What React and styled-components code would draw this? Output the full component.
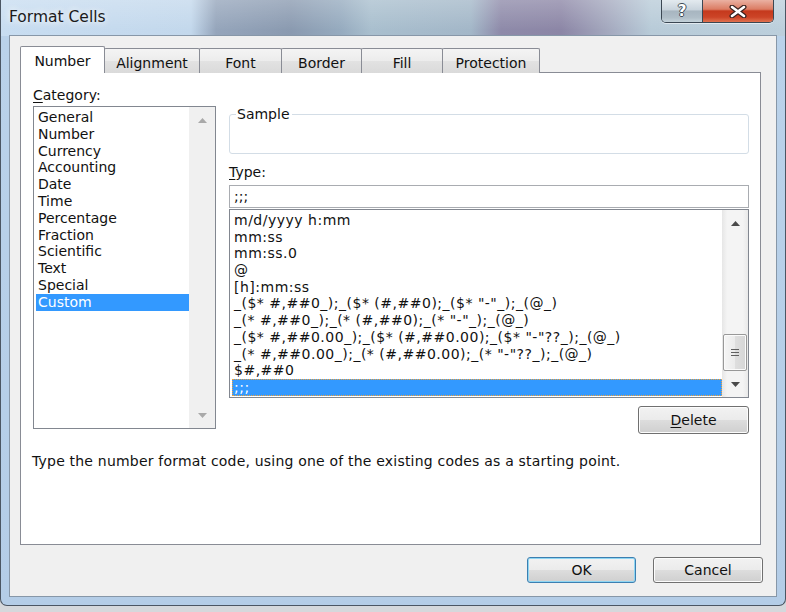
import React from 'react'
import styled, { createGlobalStyle, css } from 'styled-components'

const categories = ['General', 'Number', 'Currency', 'Accounting', 'Date', 'Time', 'Percentage', 'Fraction', 'Scientific', 'Text', 'Special', 'Custom']
const formats = [
  'm/d/yyyy h:mm',
  'mm:ss',
  'mm:ss.0',
  '@',
  '[h]:mm:ss',
  '_($* #,##0_);_($* (#,##0);_($* "-"_);_(@_)',
  '_(* #,##0_);_(* (#,##0);_(* "-"_);_(@_)',
  '_($* #,##0.00_);_($* (#,##0.00);_($* "-"??_);_(@_)',
  '_(* #,##0.00_);_(* (#,##0.00);_(* "-"??_);_(@_)',
  '$#,##0',
  ';;;'
]
const tabs = [['Number', 85], ['Alignment', 96], ['Font', 83], ['Border', 81], ['Fill', 82], ['Protection', 98]]

function Arrow({ down, color }) {
  return (
    <svg width="9" height="5" viewBox="0 0 9 5">
      <polygon points={down ? '0,0 9,0 4.5,5' : '0,5 4.5,0 9,5'} fill={color} />
    </svg>
  )
}

export default function App() {
  return (
    <>
      <GlobalStyle />
      <Window>
        <TitleBar>
          <Title>Format Cells</Title>
          <Caption>
            <CaptionButton $w={40}>
              <HelpGlyph>?</HelpGlyph>
            </CaptionButton>
            <CaptionButton $w={70} $close>
              <svg width="20" height="13" viewBox="0 0 20 13">
                <path d="M4 2 L16 11 M16 2 L4 11" stroke="#3b2320" strokeWidth="5" strokeLinecap="round" />
                <path d="M4 2 L16 11 M16 2 L4 11" stroke="#ffffff" strokeWidth="2.6" strokeLinecap="round" />
              </svg>
            </CaptionButton>
          </Caption>
        </TitleBar>
        <Client>
          <TabStrip>
            {tabs.map(([name, w], i) => (
              <Tab key={name} $w={w} $active={i === 0}>{name}</Tab>
            ))}
          </TabStrip>
          <Panel>
            <Columns>
              <LeftCol>
                <Label><Key>C</Key>ategory:</Label>
                <ListBox $h={323}>
                  <Items $top={2}>
                    {categories.map((c) => (
                      <Row key={c} $h={16.8} $selected={c === 'Custom'}>{c}</Row>
                    ))}
                  </Items>
                  <ScrollBar>
                    <ScrollButton><Arrow color="#a9a9a9" /></ScrollButton>
                    <Track />
                    <ScrollButton><Arrow down color="#a9a9a9" /></ScrollButton>
                  </ScrollBar>
                </ListBox>
              </LeftCol>
              <RightCol>
                <Group>
                  <Legend>Sample</Legend>
                  <GroupBody />
                </Group>
                <Label $gap={10}><Key>T</Key>ype:</Label>
                <TextBox>;;;</TextBox>
                <ListBox $h={189} $gap={1}>
                  <Items $top={2}>
                    {formats.map((f) => (
                      <Row key={f} $h={16.7} $spacing={0.5} $selected={f === ';;;'} $focus>{f}</Row>
                    ))}
                  </Items>
                  <ScrollBar $active>
                    <ScrollButton><Arrow color="#4a4a4a" /></ScrollButton>
                    <Track>
                      <Thumb>
                        <svg width="8" height="7" viewBox="0 0 8 7">
                          <path d="M0 0.5 H8 M0 3.5 H8 M0 6.5 H8" stroke="#606060" strokeWidth="1" />
                        </svg>
                      </Thumb>
                    </Track>
                    <ScrollButton><Arrow down color="#4a4a4a" /></ScrollButton>
                  </ScrollBar>
                </ListBox>
                <Button $w={111} $h={28} $gap={8}><Key>D</Key>elete</Button>
              </RightCol>
            </Columns>
            <Hint>Type the number format code, using one of the existing codes as a starting point.</Hint>
          </Panel>
          <Footer>
            <Button $w={109} $h={26} $default>OK</Button>
            <Button $w={110} $h={26}>Cancel</Button>
          </Footer>
        </Client>
      </Window>
    </>
  )
}

const GlobalStyle = createGlobalStyle`
  html, body {
    margin: 0;
    padding: 0;
  }
  body {
    width: 786px;
    height: 612px;
    overflow: hidden;
    background: #d5d8dc;
    font-family: "DejaVu Sans", Verdana, sans-serif;
    font-size: 14px;
    color: #111111;
  }
`

const Window = styled.div`
  width: 786px;
  height: 606px;
  box-sizing: border-box;
  display: flex;
  flex-direction: column;
  padding: 0 8px 8px 8px;
  border: 1px solid #4b5663;
  border-top: none;
  border-radius: 0 0 7px 7px;
  background:
    linear-gradient(180deg, rgba(0,0,0,0) 0, rgba(0,0,0,0) 36px, #bad2ea 36px, #b4cde7 100%),
    linear-gradient(180deg, rgba(255,255,255,0.22) 0, rgba(255,255,255,0) 30px),
    linear-gradient(90deg, #c8ddf1 0, #c3d8ec 190px, #95a5bb 215px, #8a9ab0 290px, #96abbf 340px, #a9bfce 370px, #a3b7c8 470px, #8e8aa9 500px, #8c86a6 560px, #a3a7bd 605px, #b8cbd8 650px, #bccfdc 786px);
`

const TitleBar = styled.div`
  height: 35px;
  display: flex;
  justify-content: space-between;
  align-items: flex-start;
`

const Title = styled.div`
  padding-top: 8px;
  line-height: 18px;
  font-size: 15.5px;
  color: #1b1b1b;
  text-shadow: 0 0 6px rgba(255,255,255,0.9), 0 0 10px rgba(255,255,255,0.7);
`

const Caption = styled.div`
  display: flex;
  margin-right: 3px;
  border: 1px solid #3b4753;
  border-top: none;
  border-radius: 0 0 5px 5px;
  overflow: hidden;
  box-shadow: 0 1px 0 rgba(255,255,255,0.55);
`

const CaptionButton = styled.div`
  width: ${(p) => p.$w}px;
  height: 22px;
  display: flex;
  align-items: center;
  justify-content: center;
  background: ${(p) => p.$close
    ? 'linear-gradient(180deg, #eab1a2 0%, #db7c63 42%, #c5391d 50%, #cc4427 78%, #e0714f 100%)'
    : 'linear-gradient(180deg, #e3eaef 0%, #c8d3dc 45%, #a7b5c0 50%, #b0bec8 80%, #c4d2da 100%)'};
  & + & {
    border-left: 1px solid #3b4753;
  }
`

const HelpGlyph = styled.span`
  font-family: "DejaVu Sans", sans-serif;
  font-weight: bold;
  font-size: 15px;
  line-height: 15px;
  color: #ffffff;
  text-shadow: -1px 0 #3e4b56, 1px 0 #3e4b56, 0 -1px #3e4b56, 0 1px #3e4b56;
`

const Client = styled.div`
  flex: 1;
  box-sizing: border-box;
  display: flex;
  flex-direction: column;
  padding: 10px 0 0 10px;
  background: #f0f0f0;
  border: 1px solid #8797a8;
`

const TabStrip = styled.div`
  display: flex;
  align-items: flex-end;
  height: 27px;
`

const Tab = styled.div`
  position: relative;
  z-index: ${(p) => (p.$active ? 2 : 0)};
  width: ${(p) => p.$w}px;
  height: ${(p) => (p.$active ? 27 : 25)}px;
  box-sizing: border-box;
  display: flex;
  align-items: center;
  justify-content: center;
  padding-top: ${(p) => (p.$active ? 1 : 3)}px;
  border: 1px solid #898c95;
  border-bottom: none;
  border-radius: 2px 2px 0 0;
  background: ${(p) => (p.$active ? '#ffffff' : 'linear-gradient(180deg, #f4f4f4 0%, #ececec 50%, #e2e2e2 51%, #dadada 100%)')};
  & + & {
    margin-left: -1px;
  }
`

const Panel = styled.div`
  width: 741px;
  height: 473px;
  box-sizing: border-box;
  margin-top: -1px;
  padding: 14px 11px 0 12px;
  background: #ffffff;
  border: 1px solid #898c95;
`

const Columns = styled.div`
  display: grid;
  grid-template-columns: 183px 520px;
  column-gap: 13px;
`

const LeftCol = styled.div`
  display: flex;
  flex-direction: column;
`

const RightCol = styled.div`
  display: flex;
  flex-direction: column;
  padding-top: 19px;
`

const Label = styled.div`
  line-height: 17px;
  height: 17px;
  margin-top: ${(p) => p.$gap || 0}px;
`

const Key = styled.span`
  text-decoration: underline;
  text-underline-offset: 2px;
`

const ListBox = styled.div`
  height: ${(p) => p.$h}px;
  margin-top: ${(p) => (p.$gap !== undefined ? p.$gap : 2)}px;
  box-sizing: border-box;
  display: grid;
  grid-template-columns: 1fr 26px;
  border: 1px solid #828790;
  background: #ffffff;
`

const Items = styled.div`
  padding: ${(p) => p.$top}px 0 0 2px;
  overflow: hidden;
`

const Row = styled.div`
  height: ${(p) => p.$h}px;
  line-height: ${(p) => p.$h}px;
  padding-left: 2px;
  letter-spacing: ${(p) => p.$spacing || 0}px;
  white-space: pre;
  overflow: hidden;
  ${(p) => p.$selected && css`
    background: #3399ff;
    color: #ffffff;
  `}
  ${(p) => p.$selected && p.$focus && css`
    outline: 1px dotted #f2a33a;
    outline-offset: -1px;
  `}
`

const ScrollBar = styled.div`
  display: flex;
  flex-direction: column;
  background: ${(p) => (p.$active ? 'linear-gradient(90deg, #e6e6e6 0%, #f4f4f4 20%, #f4f4f4 80%, #e9e9e9 100%)' : '#f0f0f0')};
`

const ScrollButton = styled.div`
  height: 26px;
  display: flex;
  align-items: center;
  justify-content: center;
  flex-shrink: 0;
`

const Track = styled.div`
  flex: 1;
  display: flex;
  flex-direction: column;
  justify-content: flex-end;
`

const Thumb = styled.div`
  height: 37px;
  margin: 0 1px;
  box-sizing: border-box;
  display: flex;
  align-items: center;
  justify-content: center;
  border: 1px solid #989898;
  border-radius: 2px;
  background: linear-gradient(90deg, #f5f5f5 0%, #ebebeb 50%, #dedede 51%, #d6d6d6 100%);
  box-shadow: inset 0 0 0 1px #fbfbfb;
`

const Group = styled.fieldset`
  margin: 0;
  padding: 0 6px;
  border: 1px solid #d3dde6;
  border-radius: 3px;
`

const Legend = styled.legend`
  padding: 0 2px 0 1px;
  line-height: 16px;
`

const GroupBody = styled.div`
  height: 31px;
`

const TextBox = styled.div`
  height: 23px;
  margin-top: 4px;
  box-sizing: border-box;
  padding-left: 4px;
  line-height: 21px;
  border: 1px solid #a9acb1;
  background: #ffffff;
`

const Button = styled.div`
  width: ${(p) => p.$w}px;
  height: ${(p) => p.$h}px;
  margin-top: ${(p) => p.$gap || 0}px;
  align-self: flex-end;
  box-sizing: border-box;
  display: flex;
  align-items: center;
  justify-content: center;
  border: 1px solid ${(p) => (p.$default ? '#3c7fb1' : '#707070')};
  border-radius: 3px;
  background: linear-gradient(180deg, #f2f2f2 0%, #ebebeb 50%, #dddddd 51%, #cfcfcf 100%);
  box-shadow: inset 0 0 0 1px ${(p) => (p.$default ? '#8fd6f3' : '#fcfcfc')};
  color: #111111;
`

const Hint = styled.div`
  margin: 19px 0 0 -1px;
  line-height: 16px;
  letter-spacing: 0.2px;
`

const Footer = styled.div`
  display: flex;
  justify-content: flex-end;
  gap: 17px;
  margin-top: 12px;
  padding-right: 13px;
`
